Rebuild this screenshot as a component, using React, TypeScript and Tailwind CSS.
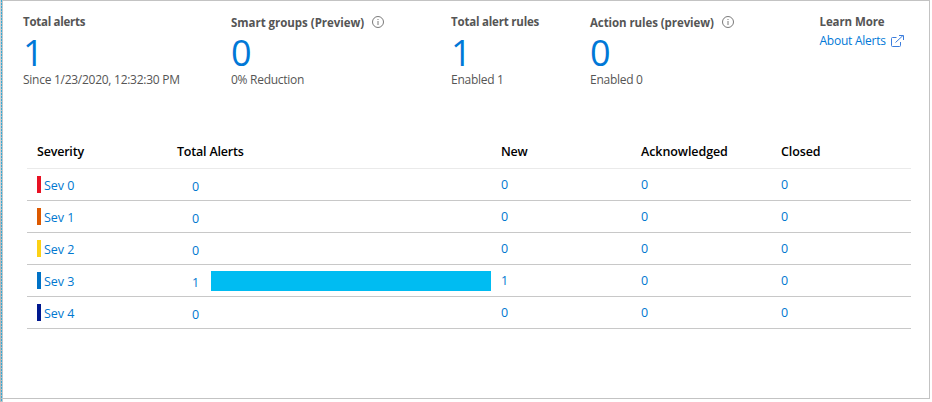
import type { ReactNode } from "react";

const severities = [
  { name: "Sev 0", color: "bg-[#e81123]", total: 0 },
  { name: "Sev 1", color: "bg-[#dd5900]", total: 0 },
  { name: "Sev 2", color: "bg-[#fcd116]", total: 0 },
  { name: "Sev 3", color: "bg-[#0072c6]", total: 1 },
  { name: "Sev 4", color: "bg-[#00188f]", total: 0 },
];

function InfoIcon() {
  return (
    <svg width="12" height="12" viewBox="0 0 12 12" fill="none" stroke="#6b6b6b" strokeWidth="0.9" className="block shrink-0">
      <circle cx="6" cy="6" r="5.5" />
      <path d="M6 5v4M6 3v1" />
    </svg>
  );
}

interface StatProps {
  title: string;
  titleClass: string;
  value: string;
  note: string;
  width: string;
  info?: boolean;
}

function Stat({ title, titleClass, value, note, width, info }: StatProps) {
  return (
    <div className={"shrink-0 whitespace-nowrap text-[#555] " + width}>
      <div className="flex h-5">
        <span className={"text-[11.5px] font-bold leading-5 " + titleClass}>{title}</span>
        {info && <span className="mt-1"><InfoIcon /></span>}
      </div>
      <div className="mt-1 h-[34px] text-[36px] leading-[34px] text-[#0078d7]">{value}</div>
      <div className="text-[12px] leading-5 tracking-[-0.27px]">{note}</div>
    </div>
  );
}

function Cell({ children }: { children: ReactNode }) {
  return <span className="w-[140px] shrink-0 text-[12.5px] leading-8">{children}</span>;
}

export default function App() {
  return (
    <main className="flex h-[402px] w-[932px] overflow-hidden bg-white font-['Open_Sans','Noto_Sans',sans-serif]">
      <div className="flex w-[3px] shrink-0">
        <div className="w-px bg-[#b8b8b8]">
          <div className="h-[211px] bg-[#cfd3d5]" />
        </div>
        <div className="w-px bg-[repeating-linear-gradient(to_bottom,#35a9d5_0px,#35a9d5_2px,#a9c4cf_2px,#a9c4cf_3px)]" />
        <div className="w-px bg-[#c8c8c8]" />
      </div>
      <section className="h-[399px] w-[927px] border-y border-r border-[#c3c3c3]">
        <header className="flex pl-5 pt-[11px]">
          <Stat title="Total alerts" titleClass="tracking-[-0.27px]" value="1" note="Since 1/23/2020, 12:32:30 PM" width="w-[208px]" />
          <Stat title="Smart groups (Preview)" titleClass="w-[141px] pt-px tracking-[-0.03px]" value="0" note="0% Reduction" info width="w-[220px]" />
          <Stat title="Total alert rules" titleClass="tracking-[-0.2px]" value="1" note="Enabled 1" width="w-[139px]" />
          <Stat title="Action rules (preview)" titleClass="w-[132px] pt-px tracking-[-0.08px]" value="0" note="Enabled 0" info width="w-[229.5px]" />
          <div className="whitespace-nowrap text-[#555]">
            <div className="text-[11.5px] font-bold leading-5 tracking-[-0.1px]">Learn More</div>
            <a className="flex text-[#0078d7]">
              <span className="w-[71px] text-[12px] leading-[18px] tracking-[-0.24px]">About Alerts</span>
              <svg width="13" height="12" viewBox="0 0 13 12" fill="none" stroke="#3b7ddd" className="mt-[3px]">
                <path d="M5.5 2.5H1.5Q.5 2.5 .5 3.5v7q0 1 1 1h7q1 0 1-1V7M4.5 7.5 12 .5M8 .5h4.5V5" />
              </svg>
            </a>
          </div>
        </header>
        <div className="ml-6 mt-[51px] w-[884px]">
          <div className="flex h-[28px] whitespace-nowrap border-b border-[#eaeaea] pl-2.5 text-[12.5px] font-semibold leading-[21px] text-black">
            <span className="w-[140px] tracking-[-0.2px]">Severity</span>
            <span className="w-[324px] tracking-[-0.2px]">Total Alerts</span>
            <span className="w-[140px] tracking-[-0.2px]">New</span>
            <span className="w-[140px] tracking-[-0.08px]">Acknowledged</span>
            <span className="tracking-[-0.1px]">Closed</span>
          </div>
          {severities.map((s) => (
            <div key={s.name} className="flex h-8 border-b border-[#c8c8c8] pl-2.5 text-[#0078d0]">
              <div className="flex w-[155px] shrink-0 pt-[7px]">
                <span className={"mr-[3px] h-[17px] w-1 " + s.color} />
                <span className="text-[12.5px] leading-[19px] tracking-[-0.05px]">{s.name}</span>
              </div>
              <span className="w-[19px] shrink-0 pt-1 text-[12.5px] leading-7">{s.total}</span>
              <div className="w-[290px] shrink-0 pt-1.5">{s.total > 0 && <div className="h-5 w-[280px] bg-[#00bcf2]" />}</div>
              <Cell>{s.total}</Cell>
              <Cell>0</Cell>
              <Cell>0</Cell>
            </div>
          ))}
        </div>
      </section>
    </main>
  );
}
